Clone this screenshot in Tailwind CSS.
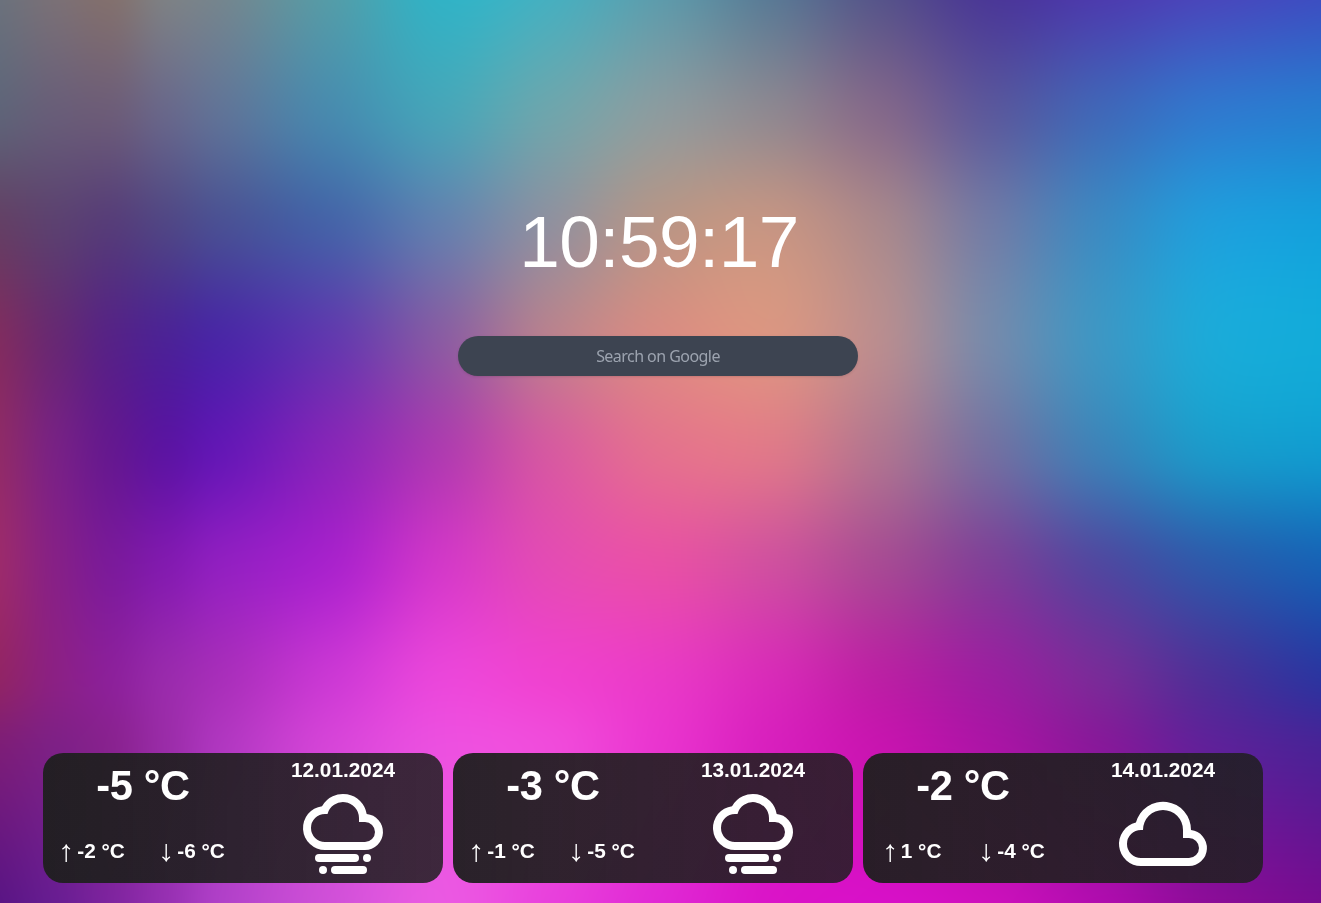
<!DOCTYPE html>
<html lang="en">
<head>
<meta charset="utf-8">
<title>New Tab</title>
<script src="https://cdn.jsdelivr.net/npm/@tailwindcss/browser@4"></script>
</head>
<body class="h-screen w-screen overflow-hidden bg-[#c030c0] font-['Liberation_Sans',Arial,sans-serif] text-white">
<canvas id="bg" width="1321" height="903" class="fixed inset-0 -z-10 h-full w-full"></canvas>

<svg class="hidden">
  <symbol id="fog" viewBox="0 0 24 24">
    <path fill-rule="evenodd" d="M7.5 16A5.5 5.5 0 0 1 6.76 5.05A6 6 0 0 1 17.92 7.02A4.5 4.5 0 0 1 17.5 16zM7.5 14h10a2.5 2.5 0 0 0 0-5H16V8A4 4 0 0 0 8.13 7H7.5a3.5 3.5 0 0 0 0 7z"/>
    <rect x="5" y="17" width="11" height="2" rx="1"/><rect x="17" y="17" width="2" height="2" rx="1"/>
    <rect x="6" y="20" width="2" height="2" rx="1"/><rect x="9" y="20" width="9" height="2" rx="1"/>
  </symbol>
  <symbol id="cloud" viewBox="0 0 24 24">
    <path fill-rule="evenodd" d="M6.5 20A5.5 5.5 0 0 1 5.23 9.15A7 7 0 0 1 19 11.03A4.5 4.5 0 0 1 18.5 20zM6.5 18h12a2.5 2.5 0 0 0 0-5H17v-2a5 5 0 0 0-10 0H6.5a3.5 3.5 0 0 0 0 7z"/>
  </symbol>
  <symbol id="up" viewBox="0 0 10.4 18">
    <path fill="none" stroke="#fff" stroke-width="1.4" d="M5.2 18V1.2M1.4 5.2Q3.8 4 5.2 1.2Q6.6 4 9 5.2"/>
  </symbol>
  <symbol id="down" viewBox="0 0 10.4 18">
    <path fill="none" stroke="#fff" stroke-width="1.4" d="M5.2 0V16.8M1.4 12.8Q3.8 14 5.2 16.8Q6.6 14 9 12.8"/>
  </symbol>
</svg>

<main class="flex h-full flex-col">
  <h1 class="mt-[200px] pr-[3px] text-center text-[73px] leading-[83px] font-normal tracking-[-0.6px]">10:59:17</h1>
  <input type="text" placeholder="Search on Google" class="mt-[53px] ml-[458px] h-10 w-[400px] rounded-[20px] bg-[#3d4451] text-center font-['Noto_Sans',sans-serif] text-base tracking-[-0.55px] text-white shadow-sm outline-none placeholder:text-[#9ca3af]">

  <section class="mt-auto mb-5 ml-[43px] flex gap-2.5">
    <article class="flex h-[130px] w-[400px] rounded-[20px] bg-linear-to-r from-[#1f1f1f]/95 to-[#1f1f1f]/85 text-[20.8px] leading-6 font-bold">
      <div class="flex w-1/2 flex-col pt-[9px] text-center">
        <p class="text-[41.6px] leading-[48px] tracking-[-0.3px]">-5 °C</p>
        <div class="mt-[29px] grid grid-cols-2">
          <p class="flex items-center justify-center"><svg class="mt-1 mr-[5.8px] h-[18px] w-[10.4px]"><use href="#up"/></svg>-2 °C</p>
          <p class="flex items-center justify-center"><svg class="mt-1 mr-[5.8px] h-[18px] w-[10.4px]"><use href="#down"/></svg>-6 °C</p>
        </div>
      </div>
      <div class="flex w-1/2 flex-col items-center pt-[5px]">
        <p>12.01.2024</p>
        <svg class="mt-1 size-24 fill-white"><use href="#fog"/></svg>
      </div>
    </article>
    <article class="flex h-[130px] w-[400px] rounded-[20px] bg-linear-to-r from-[#1f1f1f]/95 to-[#1f1f1f]/85 text-[20.8px] leading-6 font-bold">
      <div class="flex w-1/2 flex-col pt-[9px] text-center">
        <p class="text-[41.6px] leading-[48px] tracking-[-0.3px]">-3 °C</p>
        <div class="mt-[29px] grid grid-cols-2">
          <p class="flex items-center justify-center"><svg class="mt-1 mr-[5.8px] h-[18px] w-[10.4px]"><use href="#up"/></svg>-1 °C</p>
          <p class="flex items-center justify-center"><svg class="mt-1 mr-[5.8px] h-[18px] w-[10.4px]"><use href="#down"/></svg>-5 °C</p>
        </div>
      </div>
      <div class="flex w-1/2 flex-col items-center pt-[5px]">
        <p>13.01.2024</p>
        <svg class="mt-1 size-24 fill-white"><use href="#fog"/></svg>
      </div>
    </article>
    <article class="flex h-[130px] w-[400px] rounded-[20px] bg-linear-to-r from-[#1f1f1f]/95 to-[#1f1f1f]/85 text-[20.8px] leading-6 font-bold">
      <div class="flex w-1/2 flex-col pt-[9px] text-center">
        <p class="text-[41.6px] leading-[48px] tracking-[-0.3px]">-2 °C</p>
        <div class="mt-[29px] grid grid-cols-2">
          <p class="flex items-center justify-center"><svg class="mt-1 mr-[5.8px] h-[18px] w-[10.4px]"><use href="#up"/></svg>1 °C</p>
          <p class="flex items-center justify-center"><svg class="mt-1 mr-[5.8px] h-[18px] w-[10.4px]"><use href="#down"/></svg>-4 °C</p>
        </div>
      </div>
      <div class="flex w-1/2 flex-col items-center pt-[5px]">
        <p>14.01.2024</p>
        <svg class="mt-1 size-24 fill-white"><use href="#cloud"/></svg>
      </div>
    </article>
  </section>
</main>

<script>
// Mesh gradient: colour stops on a grid, smoothly interpolated in both directions.
const xs = [0,55,110,165,220,330,440,550,660,770,880,990,1100,1210,1321];
const ys = [0,113,226,339,450,563,676,750,903];
const mesh = [
  '6b717c 7a7076 82706e 7d8084 74858e 549ca8 32b2c5 47afbf 5e9bab 5b7a95 57548a 4b3897 4c3cae 4848bc 3c4fc2',
  '5f6378 685d78 6c5c78 68678a 607397 488aae 48a4b8 6fa5ac 8d9b9e 8f8890 84698a 5b599c 4068b8 3079ce 267ed0',
  '643f65 5c4070 563c79 504585 4a4f94 4662a8 647fae 91909e b99586 c69583 a9888c 717ca6 3c8ac2 209edb 14a0dc',
  '7f2c60 672873 562286 4c2296 4a26a6 6238ae 8a5ba3 bb808e d98b83 db9582 b98d8f 768aab 3d97c4 1caad8 12abd9',
  '8f2a68 782184 65188f 5c14a2 6417b5 8825b8 ae3bb0 d65aa0 e4718e df7989 b07590 7470a1 3d82b8 1b9aca 119cd0',
  '9b2a6c 862086 7b1a9a 821aaf 911fc0 a922cc d238c8 e44bb4 e850a6 d0509f a84a94 7f4098 5048a0 2d5aab 1762b5',
  '912466 8b2084 8c209a 992aac a82eba cb38d4 ea46da ef42cf e93ac6 d82bb8 bb20a4 9c1fa0 782b98 4c3098 2b35a0',
  '7c1d78 7d2086 88228f 9a2ca8 b037c0 d645d8 ec50e0 f04bdb e934cf d81fbe c814b0 ac14a6 88189a 602099 4a2296',
  '5a1585 681d92 7e249f 9630b2 b040c8 d050d8 ea59e2 e840dc e028d4 da14c8 d810c8 cc10bc b00cae 8c0c98 760c90'
].map(r => r.split(' ').map(h => [0,2,4].map(i => parseInt(h.substr(i, 2), 16))));

// Cubic Hermite weights with tangents taken across uneven neighbouring stops.
function weights(stops, p) {
  let i = 0;
  while (i < stops.length - 2 && p > stops[i + 1]) i++;
  const n = stops.length - 1, h = stops[i + 1] - stops[i];
  const t = (p - stops[i]) / h, t2 = t * t, t3 = t2 * t;
  const a = Math.max(i - 1, 0), d = Math.min(i + 2, n);
  const m0 = 0.8 * h * (t3 - 2 * t2 + t) / (stops[i + 1] - stops[a]);
  const m1 = 0.8 * h * (t3 - t2) / (stops[d] - stops[i]);
  const h1 = 3 * t2 - 2 * t3;
  return [[a, -m0], [i, 1 - h1 - m1], [i + 1, h1 + m0], [d, m1]];
}
const W = 1321, H = 903;
const ctx = document.getElementById('bg').getContext('2d');
const img = ctx.createImageData(W, H);
const rows = mesh.map(() => new Float32Array(W * 3));
for (let x = 0; x < W; x++) {
  const w = weights(xs, x);
  mesh.forEach((row, r) => {
    for (let c = 0; c < 3; c++) rows[r][x * 3 + c] = w.reduce((s, [i, k]) => s + row[i][c] * k, 0);
  });
}
for (let y = 0; y < H; y++) {
  const [[a, wa], [b, wb], [c, wc], [d, wd]] = weights(ys, y);
  for (let x = 0; x < W; x++) {
    const o = (y * W + x) * 4;
    for (let k = 0; k < 3; k++) {
      const j = x * 3 + k;
      img.data[o + k] = rows[a][j] * wa + rows[b][j] * wb + rows[c][j] * wc + rows[d][j] * wd;
    }
    img.data[o + 3] = 255;
  }
}
ctx.putImageData(img, 0, 0);
</script>
</body>
</html>
